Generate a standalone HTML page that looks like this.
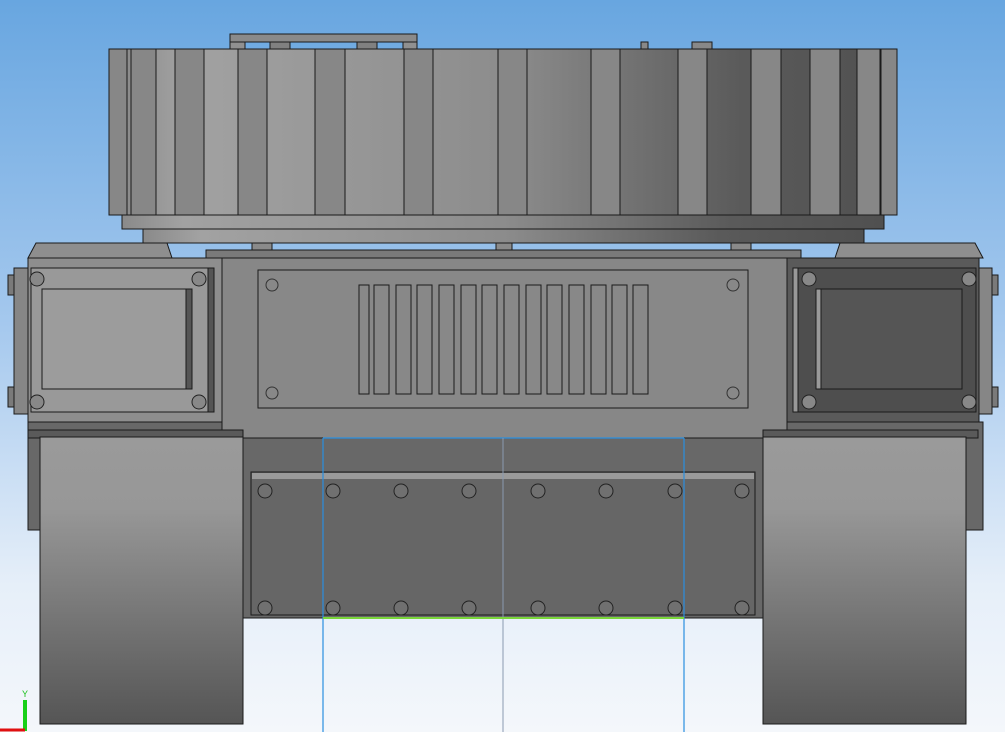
<!DOCTYPE html>
<html><head><style>
html,body{margin:0;padding:0;width:1005px;height:732px;overflow:hidden}
</style></head><body>
<svg width="1005" height="732" viewBox="0 0 1005 732" xmlns="http://www.w3.org/2000/svg" stroke="#1a1a1a" stroke-width="1">
<defs>
<linearGradient id="bg" x1="0" y1="0" x2="0" y2="1">
<stop offset="0" stop-color="#68a6e0"/><stop offset="0.45" stop-color="#a6c9ee"/><stop offset="0.8" stop-color="#e6eff9"/><stop offset="1" stop-color="#f4f7fb"/></linearGradient>
<linearGradient id="tur" x1="0" y1="0" x2="1" y2="0">
<stop offset="0" stop-color="#8a8a8a"/><stop offset="0.08" stop-color="#a2a2a2"/><stop offset="0.5" stop-color="#8c8c8c"/><stop offset="0.8" stop-color="#5a5a5a"/><stop offset="1" stop-color="#505050"/></linearGradient>
<linearGradient id="trk" x1="0" y1="0" x2="0" y2="1">
<stop offset="0" stop-color="#9a9a9a"/><stop offset="0.25" stop-color="#979797"/><stop offset="1" stop-color="#555"/></linearGradient>
</defs>
<rect x="0" y="0" width="1005" height="732" fill="url(#bg)" stroke="none"/>
<!-- turret top rail -->
<rect x="230" y="34" width="187" height="8" fill="#8a8a8a"/>
<rect x="230" y="42" width="15" height="7" fill="#909090"/>
<rect x="270" y="42" width="20" height="7" fill="#808080"/>
<rect x="357" y="42" width="20" height="7" fill="#808080"/>
<rect x="403" y="42" width="14" height="7" fill="#909090"/>
<rect x="641" y="42" width="7" height="7" fill="#888"/>
<rect x="692" y="42" width="20" height="7" fill="#888"/>
<!-- turret -->
<rect x="143" y="229" width="721" height="14" fill="url(#tur)"/>
<rect x="122" y="49" width="762" height="180" fill="url(#tur)"/>
<rect x="122" y="49" width="775" height="166" fill="url(#tur)"/>
<g fill="#878787">
<rect x="109" y="49" width="18" height="166"/><rect x="131" y="49" width="25" height="166"/>
<rect x="175" y="49" width="29" height="166"/><rect x="238" y="49" width="29" height="166"/>
<rect x="315" y="49" width="30" height="166"/><rect x="404" y="49" width="29" height="166"/>
<rect x="498" y="49" width="29" height="166"/><rect x="591" y="49" width="29" height="166"/>
<rect x="678" y="49" width="29" height="166"/><rect x="751" y="49" width="30" height="166"/>
<rect x="810" y="49" width="30" height="166"/><rect x="857" y="49" width="23" height="166"/>
<rect x="881" y="49" width="16" height="166"/>
</g>
<!-- hull top -->
<polygon points="28,258 36,243 167,243 172,258" fill="#8e8e8e"/>
<polygon points="835,258 840,243 975,243 983,258" fill="#8e8e8e"/>
<rect x="206" y="250" width="595" height="8" fill="#7a7a7a"/>
<rect x="252" y="243" width="20" height="7" fill="#8a8a8a"/>
<rect x="496" y="243" width="16" height="7" fill="#8a8a8a"/>
<rect x="731" y="243" width="20" height="7" fill="#8a8a8a"/>
<!-- side lugs -->
<rect x="8" y="275" width="8" height="20" fill="#7a7a7a"/><rect x="8" y="387" width="8" height="20" fill="#7a7a7a"/>
<rect x="14" y="268" width="16" height="146" fill="#868686"/>
<rect x="990" y="275" width="8" height="20" fill="#7a7a7a"/><rect x="990" y="387" width="8" height="20" fill="#7a7a7a"/>
<rect x="978" y="268" width="14" height="146" fill="#868686"/>
<!-- hull body -->
<rect x="28" y="422" width="955" height="108" fill="#686868"/>
<rect x="222" y="258" width="565" height="180" fill="#878787"/>
<!-- left box -->
<rect x="28" y="258" width="194" height="164" fill="#8e8e8e"/>
<rect x="31" y="268" width="183" height="144" fill="#999"/>
<rect x="208" y="268" width="6" height="144" fill="#555"/>
<rect x="42" y="289" width="144" height="100" fill="#9c9c9c"/>
<rect x="186" y="289" width="6" height="100" fill="#555"/>
<!-- right box -->
<rect x="787" y="258" width="192" height="164" fill="#5a5a5a"/>
<rect x="793" y="268" width="183" height="144" fill="#4e4e4e"/>
<rect x="793" y="268" width="5" height="144" fill="#999"/>
<rect x="816" y="289" width="146" height="100" fill="#555"/>
<rect x="816" y="289" width="5" height="100" fill="#9a9a9a"/>
<g fill="#888" stroke="#222">
<circle cx="37" cy="279" r="7"/><circle cx="199" cy="279" r="7"/><circle cx="37" cy="402" r="7"/><circle cx="199" cy="402" r="7"/>
<circle cx="809" cy="279" r="7"/><circle cx="969" cy="279" r="7"/><circle cx="809" cy="402" r="7"/><circle cx="969" cy="402" r="7"/>
</g>
<!-- grille panel -->
<rect x="258" y="270" width="490" height="138" fill="#888"/>
<g fill="none" stroke="#333"><circle cx="272" cy="285" r="6"/><circle cx="733" cy="285" r="6"/><circle cx="272" cy="393" r="6"/><circle cx="733" cy="393" r="6"/></g>
<g fill="#888">
<rect x="359" y="285" width="10" height="109"/>
<rect x="374" y="285" width="15" height="109"/><rect x="396" y="285" width="15" height="109"/>
<rect x="417" y="285" width="15" height="109"/><rect x="439" y="285" width="15" height="109"/>
<rect x="461" y="285" width="15" height="109"/><rect x="482" y="285" width="15" height="109"/>
<rect x="504" y="285" width="15" height="109"/><rect x="526" y="285" width="15" height="109"/>
<rect x="547" y="285" width="15" height="109"/><rect x="569" y="285" width="15" height="109"/>
<rect x="591" y="285" width="15" height="109"/><rect x="612" y="285" width="15" height="109"/>
<rect x="633" y="285" width="15" height="109"/>
</g>
<!-- lower center -->
<rect x="243" y="438" width="520" height="180" fill="#686868"/>
<rect x="251" y="472" width="504" height="143" fill="#666"/>
<rect x="252" y="473" width="502" height="6" fill="#9a9a9a" stroke="none"/>
<g fill="#707070" stroke="#222">
<circle cx="265" cy="491" r="7"/><circle cx="333" cy="491" r="7"/><circle cx="401" cy="491" r="7"/><circle cx="469" cy="491" r="7"/><circle cx="538" cy="491" r="7"/><circle cx="606" cy="491" r="7"/><circle cx="675" cy="491" r="7"/><circle cx="742" cy="491" r="7"/>
<circle cx="265" cy="608" r="7"/><circle cx="333" cy="608" r="7"/><circle cx="401" cy="608" r="7"/><circle cx="469" cy="608" r="7"/><circle cx="538" cy="608" r="7"/><circle cx="606" cy="608" r="7"/><circle cx="675" cy="608" r="7"/><circle cx="742" cy="608" r="7"/>
</g>
<!-- tracks -->
<rect x="28" y="430" width="215" height="8" fill="#5a5a5a"/>
<rect x="40" y="437" width="203" height="287" fill="url(#trk)"/>
<rect x="763" y="430" width="215" height="8" fill="#5a5a5a"/>
<rect x="763" y="437" width="203" height="287" fill="url(#trk)"/>
<!-- guide lines -->
<g stroke="#2a8fe0" stroke-width="1.2" fill="none">
<line x1="323" y1="438" x2="684" y2="438"/>
<line x1="323" y1="438" x2="323" y2="732"/>
<line x1="684" y1="438" x2="684" y2="732"/>
</g>
<line x1="503" y1="438" x2="503" y2="732" stroke="#8a9ab0" stroke-width="1"/>
<line x1="323" y1="618" x2="684" y2="618" stroke="#7ad63a" stroke-width="2"/>
<!-- axis -->
<line x1="25" y1="700" x2="25" y2="731" stroke="#18d018" stroke-width="4"/>
<line x1="0" y1="730" x2="25" y2="730" stroke="#e01010" stroke-width="3"/>
<text x="22" y="697" font-family="Liberation Sans, sans-serif" font-size="9" fill="#18c018" stroke="none">Y</text>
</svg>
</body></html>
